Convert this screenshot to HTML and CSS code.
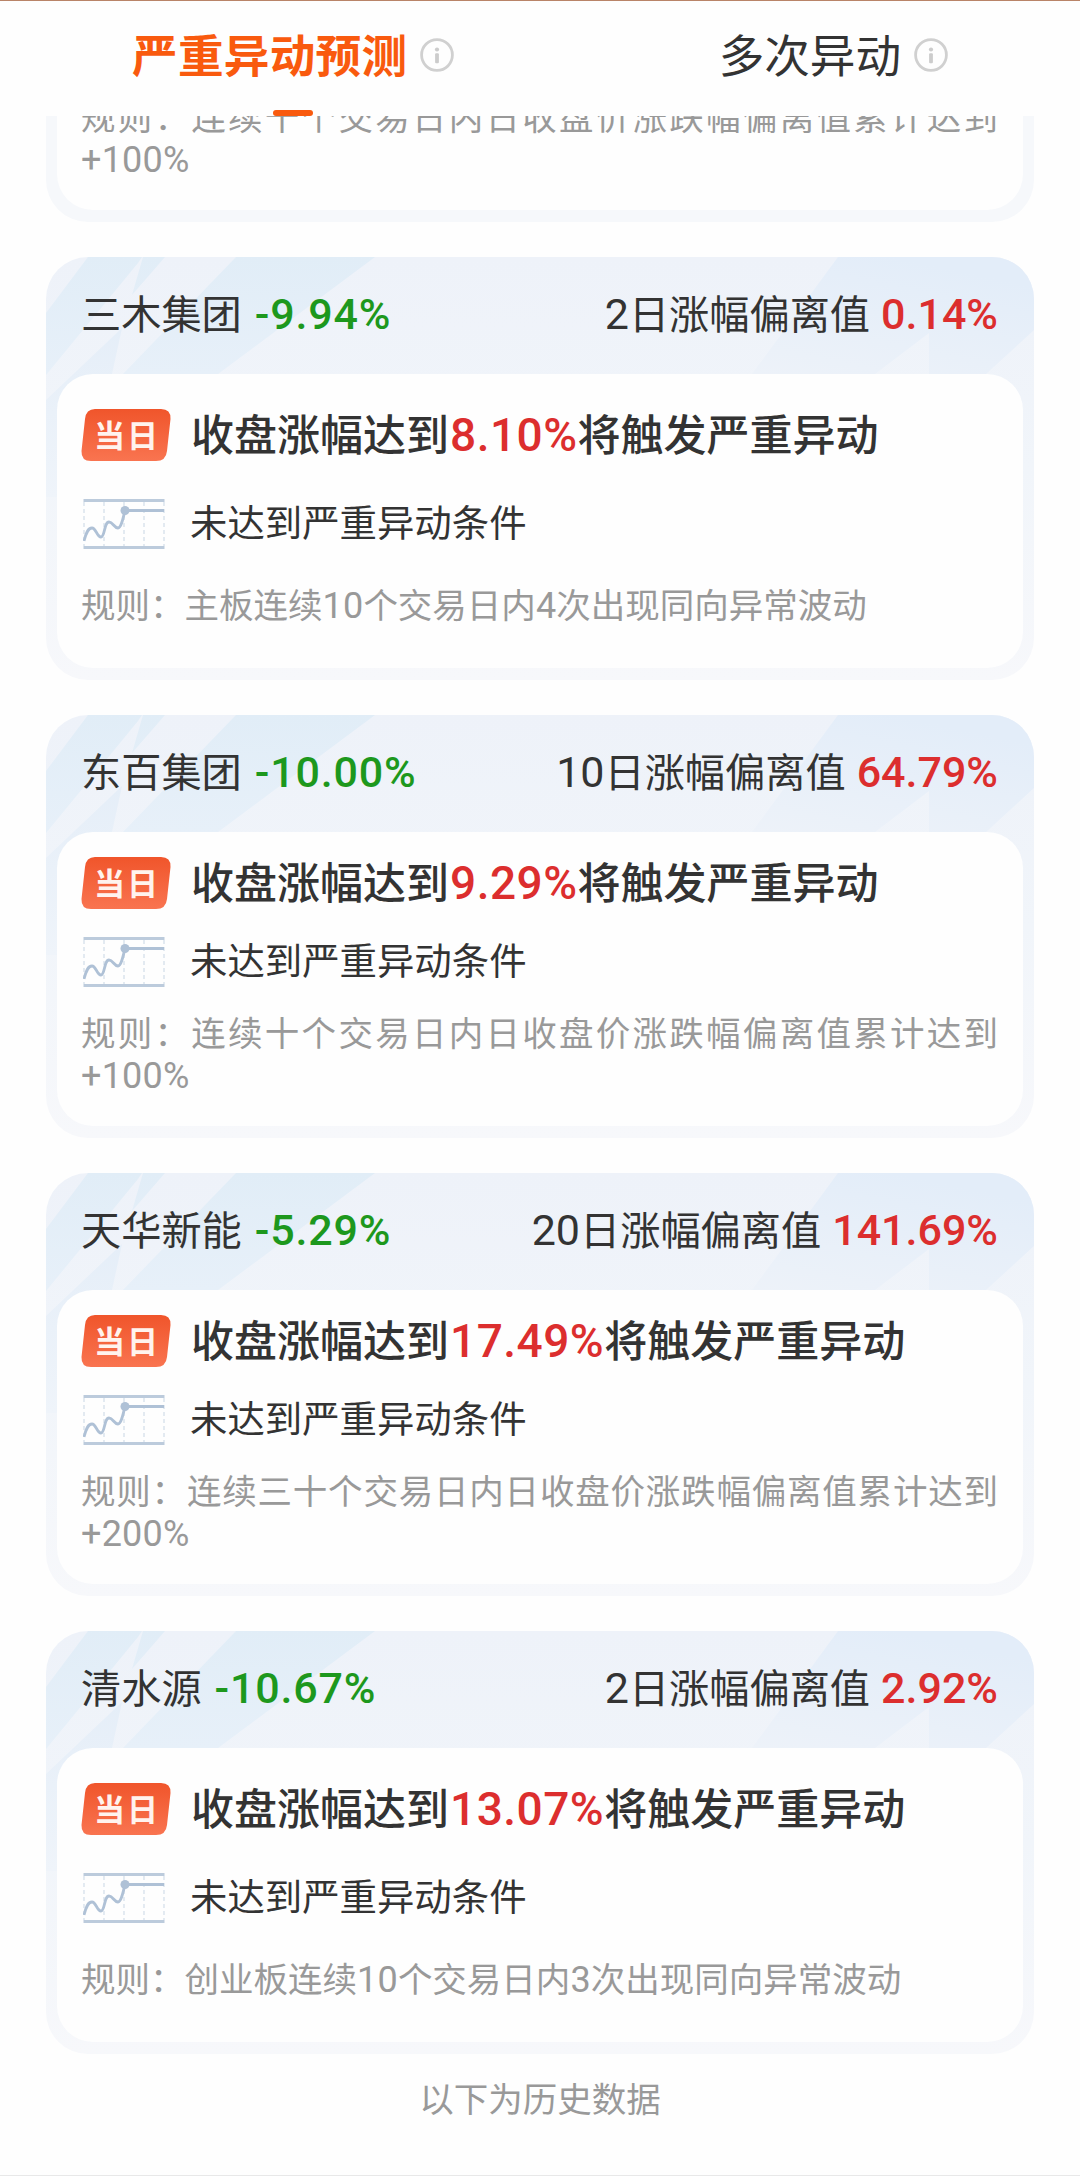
FILE: index.html
```
<!DOCTYPE html>
<html lang="zh-CN">
<head>
    <meta charset="UTF-8">
    <title>严重异动预测</title>
    <link rel="stylesheet" href="styles.css">
</head>
<body>
    <svg class="defs" width="0" height="0">
        <defs>
            <linearGradient id="streakLeft" x1="0" y1="0" x2="0" y2="1">
                <stop offset="0" stop-color="#e1edf7"/>
                <stop offset="1" stop-color="#e7f0f9"/>
            </linearGradient>
            <linearGradient id="streakFade" x1="0" y1="0" x2="0" y2="1">
                <stop offset="0" stop-color="#e5eef8"/>
                <stop offset="1" stop-color="#eff4fa"/>
            </linearGradient>
            <linearGradient id="streakRight" x1="0" y1="1" x2="0.5" y2="0">
                <stop offset="0" stop-color="#edf2f9"/>
                <stop offset="1" stop-color="#e3edf9"/>
            </linearGradient>
            <linearGradient id="badgeFill" x1="0" y1="0" x2="0" y2="1">
                <stop offset="0" stop-color="#f0552b"/>
                <stop offset="1" stop-color="#f97450"/>
            </linearGradient>
            <symbol id="streaks" viewBox="0 0 988 240">
                <path fill="url(#streakLeft)" d="M42 0H96L92 6L0 118V56ZM97 0H119L86 38ZM190 0H329L172 117H77Z"/>
                <path fill="url(#streakFade)" d="M76 71L66 117L11 240H0V143Z"/>
                <path fill="url(#streakRight)" d="M792 0H988V73L940 117H883V76L829 117H706Z"/>
            </symbol>
            <symbol id="info" viewBox="0 0 34 34">
                <circle cx="17" cy="17" r="15.4" fill="none" stroke="#d0d0d0" stroke-width="2.8"/>
                <circle cx="17" cy="11.5" r="2.1" fill="#ccc"/>
                <rect x="15.1" y="15.2" width="3.8" height="10" rx="1" fill="#ccc"/>
            </symbol>
            <symbol id="badge" viewBox="0 0 90 52">
                <path fill="url(#badgeFill)" d="M14 0H80Q90 0 89.5 10L86 42Q85 52 75 52H10Q0 52 .5 42L4 10Q5 0 14 0Z"/>
            </symbol>
            <symbol id="chart" viewBox="0 0 82 50">
                <path d="M1 3V47M21 3V47M41 3V47M61 3V47M81 3V47" stroke="#d8e2ec" stroke-width="1.4" stroke-dasharray="4 3"/>
                <path d="M.5 1.5H81.5M.5 48.5H81.5" stroke="#bccbdc" stroke-width="3"/>
                <path d="M1 42C3 34 5 29 9 29C13 29 14 38 18 38C22 38 21 23 26 23C30 23 31 29 35 29C38 29 40 20 42 11.5H81" fill="none" stroke="#afc1d6" stroke-width="2.8"/>
                <circle cx="42" cy="11.5" r="4.5" fill="#afc1d6"/>
            </symbol>
        </defs>
    </svg>

    <header class="tabs">
        <div class="tab active">
            <span>严重异动预测</span>
            <svg class="info"><use href="#info"/></svg>
        </div>
        <div class="tab">
            <span>多次异动</span>
            <svg class="info"><use href="#info"/></svg>
        </div>
    </header>

    <main class="list">
        <section class="card cut">
            <div class="card-body">
                <p class="rule">规则：连续十个交易日内日收盘价涨跌幅偏离值累计达到<span class="num">+100%</span></p>
            </div>
        </section>

        <section class="card">
            <svg class="streaks"><use href="#streaks"/></svg>
            <div class="card-head">
                <div>三木集团 <b class="num down">-9.94%</b></div>
                <div><span class="num">2</span>日涨幅偏离值 <b class="num up">0.14%</b></div>
            </div>
            <div class="card-body">
                <div class="row trigger">
                    <div class="badge"><svg><use href="#badge"/></svg><span>当日</span></div>
                    <div>收盘涨幅达到<b class="num up">8.10%</b>将触发严重异动</div>
                </div>
                <div class="row status">
                    <svg class="chart"><use href="#chart"/></svg>
                    <div>未达到严重异动条件</div>
                </div>
                <p class="rule">规则：主板连续<span class="num">10</span>个交易日内<span class="num">4</span>次出现同向异常波动</p>
            </div>
        </section>

        <section class="card">
            <svg class="streaks"><use href="#streaks"/></svg>
            <div class="card-head">
                <div>东百集团 <b class="num down">-10.00%</b></div>
                <div><span class="num">10</span>日涨幅偏离值 <b class="num up">64.79%</b></div>
            </div>
            <div class="card-body tall">
                <div class="row trigger">
                    <div class="badge"><svg><use href="#badge"/></svg><span>当日</span></div>
                    <div>收盘涨幅达到<b class="num up">9.29%</b>将触发严重异动</div>
                </div>
                <div class="row status">
                    <svg class="chart"><use href="#chart"/></svg>
                    <div>未达到严重异动条件</div>
                </div>
                <p class="rule">规则：连续十个交易日内日收盘价涨跌幅偏离值累计达到<span class="num">+100%</span></p>
            </div>
        </section>

        <section class="card">
            <svg class="streaks"><use href="#streaks"/></svg>
            <div class="card-head">
                <div>天华新能 <b class="num down">-5.29%</b></div>
                <div><span class="num">20</span>日涨幅偏离值 <b class="num up">141.69%</b></div>
            </div>
            <div class="card-body tall">
                <div class="row trigger">
                    <div class="badge"><svg><use href="#badge"/></svg><span>当日</span></div>
                    <div>收盘涨幅达到<b class="num up">17.49%</b>将触发严重异动</div>
                </div>
                <div class="row status">
                    <svg class="chart"><use href="#chart"/></svg>
                    <div>未达到严重异动条件</div>
                </div>
                <p class="rule">规则：连续三十个交易日内日收盘价涨跌幅偏离值累计达到<span class="num">+200%</span></p>
            </div>
        </section>

        <section class="card">
            <svg class="streaks"><use href="#streaks"/></svg>
            <div class="card-head">
                <div>清水源 <b class="num down">-10.67%</b></div>
                <div><span class="num">2</span>日涨幅偏离值 <b class="num up">2.92%</b></div>
            </div>
            <div class="card-body">
                <div class="row trigger">
                    <div class="badge"><svg><use href="#badge"/></svg><span>当日</span></div>
                    <div>收盘涨幅达到<b class="num up">13.07%</b>将触发严重异动</div>
                </div>
                <div class="row status">
                    <svg class="chart"><use href="#chart"/></svg>
                    <div>未达到严重异动条件</div>
                </div>
                <p class="rule">规则：创业板连续<span class="num">10</span>个交易日内<span class="num">3</span>次出现同向异常波动</p>
            </div>
        </section>
    </main>

    <footer class="history">以下为历史数据</footer>
</body>
</html>
```

FILE: styles.css
```
* { box-sizing: border-box; }
body { margin: 0; height: 2176px; overflow: hidden; display: flex; flex-direction: column; background: #fefefe; color: #333; font-family: "Noto Sans CJK SC", sans-serif; border-bottom: 1px solid #e8e8e8; }
.defs { position: absolute; }

.tabs { position: relative; z-index: 1; display: flex; justify-content: space-between; height: 116px; padding: 0 132px; border-top: 1px solid #b98468; background: #fefefe; }
.tab { position: relative; display: flex; gap: 13px; height: 109px; align-items: center; font-size: 45.6px; }
.tab span { margin-top: -6px; }
.tab .info { margin-top: -1px; }
.tab.active { color: #f95a0e; font-weight: 700; letter-spacing: 0.3px; }
.tab.active::after { content: ""; position: absolute; left: 141px; bottom: -6px; width: 40px; height: 6px; border-radius: 3px; background: #f95a0e; }
.info { width: 34px; height: 34px; }

.list { display: flex; flex-direction: column; gap: 35px; padding: 0 46px; }
.card { position: relative; height: 423px; padding: 0 11px 12px; border-radius: 42px; overflow: hidden; background: linear-gradient(#eef2f9, #f1f5fa 50%, #f7f8fb); }
.streaks { position: absolute; left: 0; top: 0; width: 988px; height: 240px; }
.card-head { position: relative; display: flex; justify-content: space-between; align-items: center; height: 117px; padding: 0 25px 7px 24px; font-size: 40.2px; line-height: 60px; white-space: pre; }
.card-body { position: relative; height: 294px; padding: 33px 25px 0 24px; border-radius: 36px; background: #fefefe; }

.num { font-family: Roboto, sans-serif; font-size: 1.07em; line-height: 1; font-weight: 400; }
b.num { font-weight: 500; }
.up { color: #dc2e2e; }
.down { color: #1d981d; }
.card-head .up { margin-left: 2px; }
.card-head .down { margin-left: 4px; letter-spacing: 0.8px; }

.row { display: flex; align-items: flex-start; white-space: nowrap; }
.trigger { gap: 20px; height: 56px; padding-top: 2px; font-size: 43px; font-weight: 500; line-height: 46px; }
.trigger .up { margin-left: 1px; letter-spacing: 0.5px; }
.status { gap: 25px; height: 50px; margin-top: 36px; padding-left: 2px; font-size: 37.4px; line-height: 44px; }
.rule { margin: 33px 0 0; font-size: 34.5px; line-height: 42px; color: #999; text-align: justify; }
.rule .num { font-size: 36px; letter-spacing: 0.2px; }
.tall { padding-top: 23px; }
.tall .status { margin-top: 26px; }
.tall .rule { margin-top: 23px; }

.badge { position: relative; width: 90px; height: 52px; }
.badge svg { display: block; width: 90px; height: 52px; }
.badge span { position: absolute; left: 0; top: 0; width: 92px; text-align: center; font-size: 31px; font-weight: 700; line-height: 50px; letter-spacing: 2px; color: #fff3ee; }
.chart { width: 82px; height: 50px; }

/* first card is scrolled under the tabs */
.cut { height: 106px; border-radius: 0 0 42px 42px; background: #f6f8fb; overflow: visible; }
.cut .card-body { display: flex; height: 94px; padding-top: 0; border-radius: 0 0 36px 36px; }
.cut .rule { margin-top: -22px; }

.history { margin-top: 22px; text-align: center; font-size: 34.5px; line-height: 42px; color: #999; }
```
